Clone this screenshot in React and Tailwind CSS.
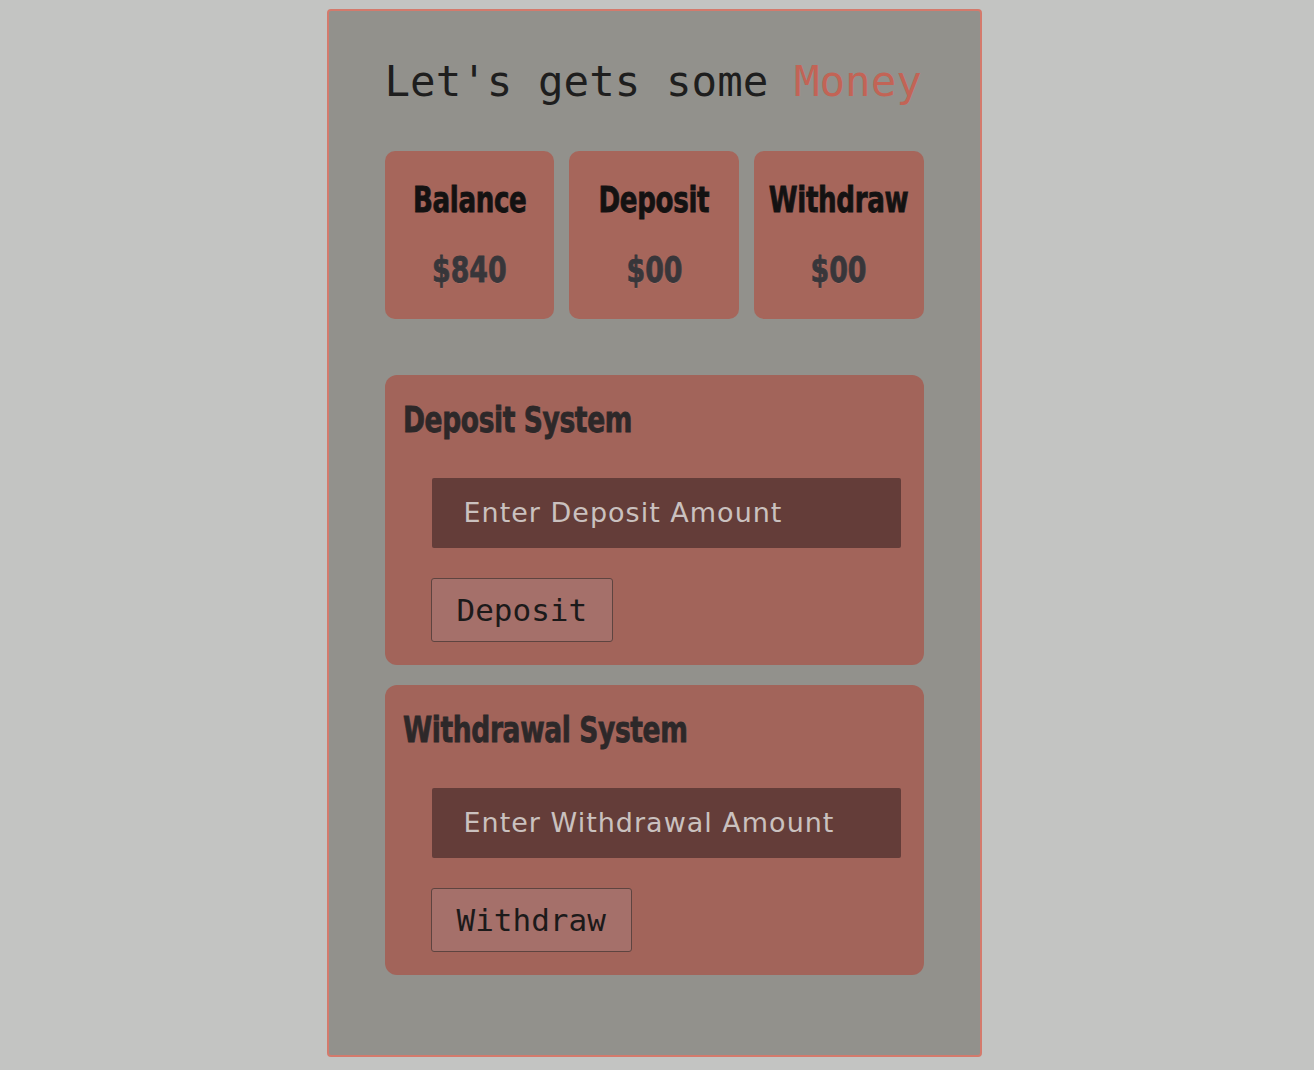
import React from "react";

const impact = { fontFamily: "Impact, 'DejaVu Sans', sans-serif" };
const mono = { fontFamily: "'DejaVu Sans Mono', 'Liberation Mono', monospace" };
const sans = { fontFamily: "'DejaVu Sans', Verdana, sans-serif" };

function Stat({ label, value }) {
  return (
    <div className="flex h-[168px] min-w-0 flex-col items-center overflow-visible rounded-[10px] bg-[#a6665b] pt-[30px]">
      <div
        style={impact}
        className="inline-block origin-center scale-x-[0.77] scale-y-[1.05] whitespace-nowrap text-[34px] font-bold leading-[36px] tracking-[-0.5px] text-[#141212] [-webkit-text-stroke:0.8px_#141212]"
      >
        {label}
      </div>
      <div
        style={impact}
        className="mt-[34px] inline-block origin-center scale-x-[0.79] scale-y-[1.05] whitespace-nowrap text-[34px] font-bold leading-[36px] text-[#38363a] [-webkit-text-stroke:0.8px_#38363a] [text-shadow:0_1px_0_rgba(255,255,255,0.15)]"
      >
        {value}
      </div>
    </div>
  );
}

function System({ title, placeholder, button }) {
  return (
    <div className="flex h-[290px] flex-col rounded-[12px] bg-[#a2645a] pl-[18px] pr-[23px] pt-[25px]">
      <div>
        <div
          style={impact}
          className="inline-block origin-left scale-x-[0.78] scale-y-[1.05] whitespace-nowrap text-[34px] font-bold leading-[38px] tracking-[-0.5px] text-[#2d2829] [-webkit-text-stroke:0.8px_#2d2829]"
        >
          {title}
        </div>
      </div>
      <div className="ml-[29px] mt-[40px] flex h-[70px] items-center rounded-[2px] bg-[#643d39] pl-[32px]">
        <span style={sans} className="text-[27px] tracking-[1px] text-[#cac1bf]">
          {placeholder}
        </span>
      </div>
      <div className="ml-[28px] mt-[30px]">
        <button
          style={mono}
          className="h-[64px] rounded-[3px] border border-[#5e4440] bg-[#a5706a] px-[25px] text-[31px] text-[#1c1a1a]"
        >
          {button}
        </button>
      </div>
    </div>
  );
}

export default function App() {
  return (
    <div className="flex min-h-[1070px] w-full justify-center bg-[#c3c4c2] pr-[6px] pt-[9px]">
      <div className="flex h-[1048px] w-[655px] flex-col rounded-[4px] border-2 border-[#d47a6c] bg-[#92918c] px-[56px]">
        <h1 style={mono} className="mt-[46px] text-[42.5px] leading-[50px] text-[#1e1e1e]">
          Let's gets some <span className="text-[#c26456]">Money</span>
        </h1>
        <div className="mt-[44px] grid grid-cols-3 gap-[15px]">
          <Stat label="Balance" value="$840" />
          <Stat label="Deposit" value="$00" />
          <Stat label="Withdraw" value="$00" />
        </div>
        <div className="mt-[56px]">
          <System title="Deposit System" placeholder="Enter Deposit Amount" button="Deposit" />
        </div>
        <div className="mt-[20px]">
          <System title="Withdrawal System" placeholder="Enter Withdrawal Amount" button="Withdraw" />
        </div>
      </div>
    </div>
  );
}
